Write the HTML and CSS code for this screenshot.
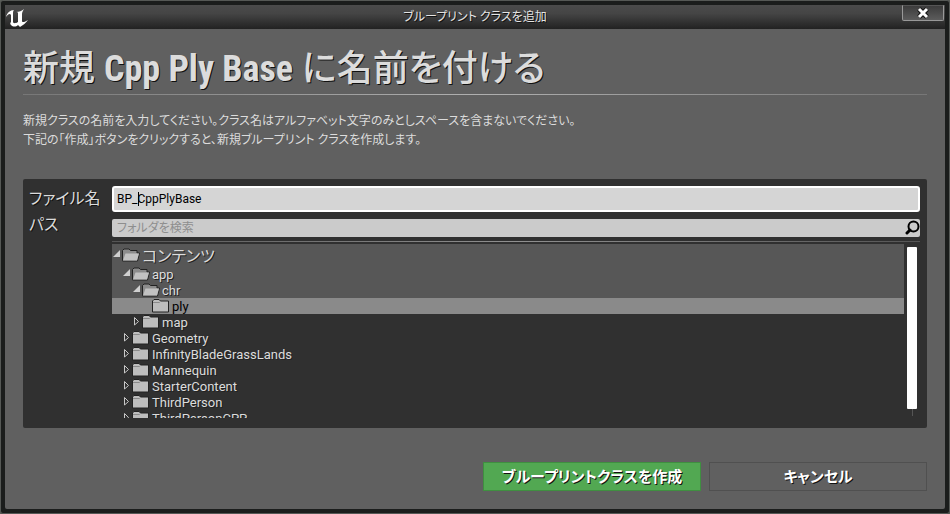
FILE: index.html
```
<!DOCTYPE html>
<html lang="ja">
<head>
  <meta charset="UTF-8">
  <title>ブループリント クラスを追加</title>
  <link rel="stylesheet" href="styles.css">
</head>
<body>

<!-- shared icons -->
<svg class="defs" width="0" height="0">
  <symbol id="folder" viewBox="0 0 18 14">
    <path d="M.5 3V2L2 .5H7L8.500 2H16.500V13H.5z" fill="#bdbdbd" stroke="#222"/>
    <path d="M1 3.500H7.500L8.500 2.500" fill="none" stroke="#8a8a8a"/>
  </symbol>
  <symbol id="folder-open" viewBox="0 0 18 14">
    <path d="M.5 12.500V2.500L2 1H7l1.500 1.500H15V5H17.500L15.500 13H.5z" fill="#8c8c8c" stroke="#222"/>
    <path d="M1 12.500L3.500 5.500H17L15 12.500z" fill="#c2c2c2"/>
  </symbol>
  <symbol id="open" viewBox="0 0 10 10">
    <path d="M8 0V7H1z" fill="#d0d0d0"/>
  </symbol>
  <symbol id="closed" viewBox="0 0 10 10">
    <path d="M2.500 .5V8L6.500 4.500z" fill="none" stroke="#c8c8c8"/>
  </symbol>
</svg>

<div class="window">
  <header class="titlebar">
    <svg class="logo" viewBox="0 0 24 20">
      <path d="M1 10C2 6 5 3 9 3C8 4 8 5 8 7V15C8 16 10 17 13 15V6C13 5 12 5 11 5C14 5 17 4 19 2C18 4 17 5 17 7V14C17 16 20 15 23 13C21 16 18 18 15 20L13 18C11 20 8 20 6 18C5 17 5 16 6 15V8C5 6 3 7 1 10z" fill="#fff"/>
    </svg>
    <span class="title">ブループリント クラスを追加</span>
    <button class="close" aria-label="閉じる">
      <svg width="14" height="12" viewBox="0 0 14 12">
        <path d="M3 2L11 10M11 2L3 10" stroke="#111" stroke-width="5"/>
        <path d="M3 2L11 10M11 2L3 10" stroke="#fff" stroke-width="3"/>
      </svg>
    </button>
  </header>

  <main class="content">
    <h1>新規 <b>Cpp Ply Base</b> に名前を付ける</h1>
    <p>新規クラスの名前を入力してください。クラス名はアルファベット文字のみとしスペースを含まないでください。<br>
    下記の「作成」ボタンをクリックすると、新規ブループリント クラスを作成します。</p>

    <section class="panel">
      <label for="filename">ファイル名</label>
      <div class="name-box">
        <input id="filename" type="text" value="BP_CppPlyBase">
        <span class="caret"></span>
      </div>
      <label for="search">パス</label>
      <div class="path">
        <div class="search-box">
          <input id="search" type="text" placeholder="フォルダを検索">
          <button class="find" aria-label="検索">
            <svg width="16" height="16" viewBox="0 0 16 16">
              <circle cx="9.500" cy="7.500" r="5" fill="none" stroke="#000" stroke-width="2"/>
              <path d="M6 11L3 14" stroke="#000" stroke-width="3" stroke-linecap="round"/>
            </svg>
          </button>
        </div>
        <hr>
        <div class="tree-box">
          <ul class="tree">
            <li class="root parent"><svg class="arrow"><use href="#open"/></svg><svg class="icon"><use href="#folder-open"/></svg>コンテンツ</li>
            <li class="level1 parent"><svg class="arrow"><use href="#open"/></svg><svg class="icon"><use href="#folder-open"/></svg>app</li>
            <li class="level2 parent"><svg class="arrow"><use href="#open"/></svg><svg class="icon"><use href="#folder-open"/></svg>chr</li>
            <li class="level3 selected"><svg class="arrow"></svg><svg class="icon"><use href="#folder"/></svg>ply</li>
            <li class="level2"><svg class="arrow"><use href="#closed"/></svg><svg class="icon"><use href="#folder"/></svg>map</li>
            <li class="level1"><svg class="arrow"><use href="#closed"/></svg><svg class="icon"><use href="#folder"/></svg>Geometry</li>
            <li class="level1"><svg class="arrow"><use href="#closed"/></svg><svg class="icon"><use href="#folder"/></svg>InfinityBladeGrassLands</li>
            <li class="level1"><svg class="arrow"><use href="#closed"/></svg><svg class="icon"><use href="#folder"/></svg>Mannequin</li>
            <li class="level1"><svg class="arrow"><use href="#closed"/></svg><svg class="icon"><use href="#folder"/></svg>StarterContent</li>
            <li class="level1"><svg class="arrow"><use href="#closed"/></svg><svg class="icon"><use href="#folder"/></svg>ThirdPerson</li>
            <li class="level1"><svg class="arrow"><use href="#closed"/></svg><svg class="icon"><use href="#folder"/></svg>ThirdPersonCPP</li>
          </ul>
          <div class="scrollbar"><div class="thumb"></div><div class="track"></div></div>
        </div>
      </div>
    </section>

    <footer>
      <button class="create">ブループリントクラスを作成</button>
      <button class="cancel">キャンセル</button>
    </footer>
  </main>
</div>

</body>
</html>
```
FILE: styles.css
```
* { box-sizing: border-box; }
body { margin: 0; background: #5a5e58; color: #dcdcdc; font: 12px Roboto, "Noto Sans CJK JP", sans-serif; font-feature-settings: "palt"; }
button, input { font: inherit; font-feature-settings: inherit; padding: 0; border: 0; border-radius: 0; outline: none; }
.defs { position: absolute; }

.window { height: 100vh; display: flex; flex-direction: column; border: 1px solid #555855; border-radius: 3px; background: #1b1d1c; padding: 4px; }

/* title bar */
.titlebar { height: 24px; flex: none; display: grid; grid-template-columns: 1fr auto 1fr; background: linear-gradient(#4b4b4b, #454545 35%, #222); text-shadow: 1px 1px #111; }
.logo { width: 24px; height: 24px; }
.title { line-height: 24px; color: #e4e4e4; }
.close { justify-self: end; display: flex; align-items: center; justify-content: center; width: 42px; height: 16px; margin-right: 1px; background: linear-gradient(#3c3c3c, #5c5c5c); border: 1px solid #999; border-top-color: #555; border-radius: 0 0 2px 2px; }

.content { flex: 1; min-height: 0; display: flex; flex-direction: column; padding: 12px 18px 18px; background: #606060; border-radius: 0 0 2px 2px; }
h1 { margin: 0; height: 54px; line-height: 56px; font-size: 36px; font-weight: 500; white-space: nowrap; text-shadow: 1px 1px #111; border-bottom: 1px solid; border-image: linear-gradient(90deg, #777, #b0b0b0 50%, #777) 1; }
h1 b { font-family: "Roboto Condensed", Roboto, sans-serif; font-weight: 700; }
p { margin: 17px 0 29px; line-height: 19px; }

/* name and path */
.panel { flex: 1; min-height: 0; display: grid; grid-template-columns: 83px 1fr; grid-template-rows: 26px 1fr; row-gap: 7px; padding: 7px 7px 10px 6px; background: #303030; border-radius: 2px; }
.panel label { font-size: 16px; line-height: 26px; text-shadow: 1px 1px #111; }
.panel label[for="search"] { line-height: 12px; }
.name-box { position: relative; }
.name-box input { width: 100%; height: 26px; padding: 0 3px; background: #d5d5d5; border: 2px solid #fff; border-radius: 3px; color: #000; }
.caret { position: absolute; left: 26px; top: 6px; width: 1px; height: 14px; background: #000; }

.path { min-height: 0; display: flex; flex-direction: column; }
.search-box { flex: none; display: flex; height: 18px; background: #cbcbcb; border-radius: 2px; }
.search-box input { flex: 1; padding: 0 5px; background: none; color: #000; }
.search-box input::placeholder { color: #8e8e8e; }
.find { width: 16px; height: 18px; background: none; }
hr { flex: none; width: 100%; height: 1px; margin: 4px 0 2px; border: 0; background: linear-gradient(90deg, #555, #909090 50%, #555); }

/* folder tree */
.tree-box { flex: 1; min-height: 0; display: flex; gap: 3px; overflow: hidden; }
.tree { flex: 1; margin: 0; padding: 0; list-style: none; font-size: 13px; }
.tree li { display: flex; align-items: center; height: 16px; text-shadow: 1px 1px #222; }
.tree .root { height: 22px; font-size: 16px; }
.tree .level1 { padding-left: 10px; }
.tree .level2 { padding-left: 20px; }
.tree .level3 { padding-left: 30px; }
.tree .parent { background: #575757; }
.tree .selected { background: #8a8a8a; color: #000; text-shadow: none; }
.arrow { flex: none; width: 10px; height: 10px; }
.icon { flex: none; width: 18px; height: 14px; margin-right: 2px; }
.scrollbar { width: 10px; margin: 3px 3px 2px 0; display: flex; flex-direction: column; align-items: center; }
.thumb { width: 100%; flex: 1; background: #fff; border-radius: 1px; }
.track { width: 1px; height: 7px; background: #555; }

footer { flex: none; display: flex; justify-content: flex-end; gap: 8px; margin-top: 34px; }
footer button { width: 218px; height: 29px; padding-bottom: 3px; border: 1px solid #505050; background: #606060; color: #fff; font-size: 15px; font-weight: 700; text-shadow: 1px 1px #111; }
footer .create { background: #52a852; border-color: #3f8f40; }
```
